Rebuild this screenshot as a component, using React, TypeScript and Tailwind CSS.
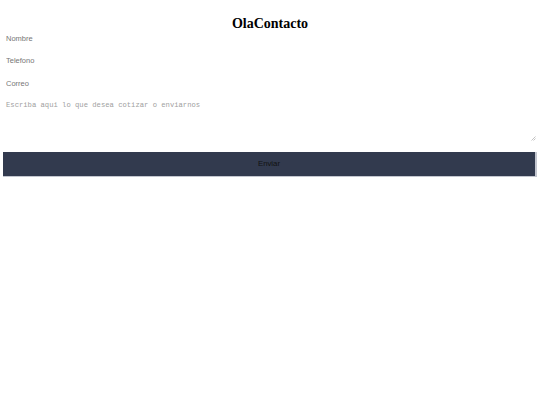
export default function App() {
  return (
    <div className="w-[540px] h-[405px] bg-white" style={{ fontFamily: '"Liberation Sans", Arial, sans-serif' }}>
      <h1
        className="pt-[17px] text-center text-[14px] leading-[14px] font-bold text-black"
        style={{ fontFamily: '"Liberation Serif", "Times New Roman", serif' }}
      >
        OlaContacto
      </h1>
      <form className="flex flex-col gap-[8.5px] px-[3px]" onSubmit={(e) => e.preventDefault()}>
        <input
          type="text"
          placeholder="Nombre"
          className="h-[14px] w-full px-[3px] text-[7.5px] outline-none placeholder:text-[#767676]"
        />
        <input
          type="text"
          placeholder="Telefono"
          className="h-[14px] w-full px-[3px] text-[7.5px] outline-none placeholder:text-[#767676]"
        />
        <input
          type="text"
          placeholder="Correo"
          className="h-[14px] w-full px-[3px] text-[7.5px] outline-none placeholder:text-[#767676]"
        />
        <div className="relative">
          <textarea
            placeholder="Escriba aqui lo que desea cotizar o enviarnos"
            className="block h-[45px] w-full resize-none px-[3px] pt-[2px] text-[7.2px] leading-[9px] outline-none placeholder:text-[#a0a0a0]"
            style={{ fontFamily: '"Liberation Mono", "Courier New", monospace' }}
          />
          {/* resize grip */}
          <svg className="absolute right-[1px] bottom-[3px]" width="5" height="5" viewBox="0 0 5 5">
            <path d="M4.5 0.5 L0.5 4.5 M4.5 2.5 L2.5 4.5" stroke="#b5b5b5" strokeWidth="0.8" />
          </svg>
        </div>
        <button
          type="submit"
          className="-mt-[0.5px] h-[25px] w-full bg-[#323a4e] border-r-2 border-b border-[#c3c6cf] text-[7.8px] text-[#111]"
        >
          Enviar
        </button>
      </form>
    </div>
  );
}
